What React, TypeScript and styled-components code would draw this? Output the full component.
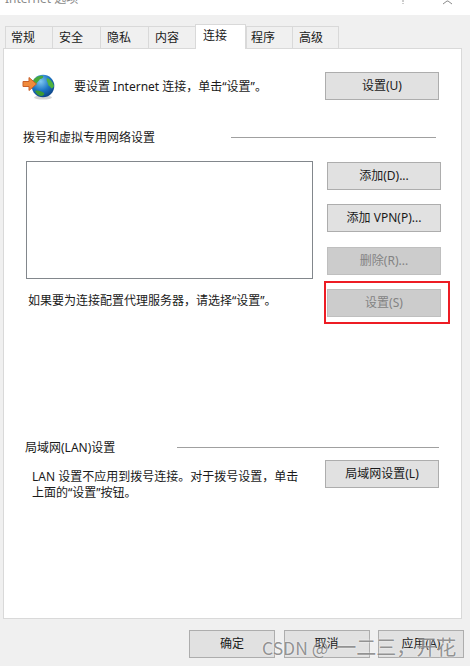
import React from "react";
import styled, { createGlobalStyle } from "styled-components";

const Global = createGlobalStyle`
  html, body { margin: 0; padding: 0; background: #fff; }
  * { box-sizing: border-box; }
`;

const Frame = styled.div`
  position: relative;
  width: 470px;
  height: 666px;
  overflow: hidden;
  display: flex;
  flex-direction: column;
  background: #f0f0f0;
  color: #1a1a1a;
  font: 12px/16px "Noto Sans", "Noto Sans CJK SC", sans-serif;
`;

const TitleBar = styled.div`
  height: 15px;
  flex: none;
  background: #fff;
  overflow: hidden;
  display: flex;
  justify-content: space-between;
  padding: 0 16px 0 5px;
`;

const TitleText = styled.div`
  margin-top: -9px;
  color: #8a8a8a;
  font-size: 12px;
  line-height: 16px;
`;

const TitleControls = styled.svg`
  width: 60px;
  height: 6px;
`;

const TabStrip = styled.div`
  flex: none;
  display: flex;
  align-items: flex-end;
  height: 25px;
  margin-top: 9px;
  padding-left: 5px;
  position: relative;
  z-index: 1;
  margin-bottom: -1px;
`;

const Tab = styled.div<{ $w: number; $pad: number; $active?: boolean }>`
  width: ${(p) => p.$w}px;
  height: ${(p) => (p.$active ? 25 : 23)}px;
  display: flex;
  align-items: center;
  padding-left: ${(p) => p.$pad}px;
  padding-bottom: ${(p) => (p.$active ? 2 : 0)}px;
  background: ${(p) => (p.$active ? "#fff" : "#f0f0f0")};
  border: 1px solid #d9d9d9;
  border-right-width: ${(p) => (p.$active ? 1 : 0)}px;
  border-bottom-width: ${(p) => (p.$active ? 0 : 1)}px;
  &:last-child { border-right-width: 1px; }
`;

const Panel = styled.div`
  flex: none;
  height: 571px;
  margin: 0 8px 0 3px;
  background: #fff;
  border: 1px solid #d9d9d9;
  display: flex;
  flex-direction: column;
  padding: 23px 22px 0 18px;
`;

const IntroRow = styled.div`
  display: flex;
  align-items: center;
  height: 28px;
`;

const Globe = styled.svg`
  width: 34px;
  height: 28px;
  flex: none;
  margin-top: 2px;
`;

const IntroText = styled.div`
  margin-left: 18px;
  flex: 1;
  margin-top: 2px;
`;

const Btn = styled.div<{ $disabled?: boolean; $w?: number }>`
  width: ${(p) => p.$w ?? 114}px;
  height: 28px;
  flex: none;
  display: flex;
  align-items: center;
  justify-content: center;
  background: ${(p) => (p.$disabled ? "#cccccc" : "#e1e1e1")};
  border: 1px solid ${(p) => (p.$disabled ? "#bfbfbf" : "#adadad")};
  color: ${(p) => (p.$disabled ? "#838383" : "#1a1a1a")};
`;

const GroupHead = styled.div<{ $top: number; $left: number; $gap: number; $right: number }>`
  display: flex;
  align-items: center;
  margin-top: ${(p) => p.$top}px;
  margin-left: ${(p) => p.$left}px;
  margin-right: ${(p) => p.$right}px;
  height: 16px;
  gap: ${(p) => p.$gap}px;
`;

const Rule = styled.div`
  flex: 1;
  height: 1px;
  background: #a0a0a0;
  margin-top: -1px;
`;

const DialArea = styled.div`
  display: grid;
  grid-template-columns: 287px 114px;
  column-gap: 14px;
  margin: 16px 0 0 4px;
  width: 415px;
`;

const ListBox = styled.div`
  height: 118px;
  border: 1px solid #82878c;
  background: #fff;
  margin-top: -1px;
`;

const SideStack = styled.div`
  display: flex;
  flex-direction: column;
  gap: 14.33px;
`;

const ProxyNote = styled.div`
  margin: 14px 0 0 2px;
`;

const LanBody = styled.div`
  display: flex;
  justify-content: space-between;
  margin-top: 4px;
  padding-left: 10px;
  width: 417px;
`;

const LanText = styled.div`
  width: 276px;
  padding-top: 9px;
`;

const Footer = styled.div`
  flex: none;
  display: flex;
  justify-content: flex-end;
  gap: 8.5px;
  padding: 11px 6px 0 0;
`;

const Highlight = styled.div`
  position: absolute;
  left: 324px;
  top: 281px;
  width: 126px;
  height: 43px;
  border: 2px solid #ed1c24;
  pointer-events: none;
`;

const Watermark = styled.div`
  position: absolute;
  left: 262px;
  top: 634px;
  font-family: "Noto Sans CJK SC", sans-serif;
  font-size: 20px;
  line-height: 26px;
  white-space: nowrap;
  color: rgba(120, 120, 120, 0.8);
  text-shadow: 0 0 2px rgba(255, 255, 255, 0.9);
  pointer-events: none;
`;

const WatermarkLatin = styled.span`
  font-size: 17.500px;
  margin-right: 8px;
`;

const tabs: [string, number, number][] = [
  ["常规", 47, 5],
  ["安全", 48, 6],
  ["隐私", 48, 6],
  ["内容", 47, 6],
  ["连接", 51, 7],
  ["程序", 46, 4],
  ["高级", 47, 6],
];

const GlobeIcon = () => (
  <Globe viewBox="0 0 34 28">
    <defs>
      <radialGradient id="sea" cx="40%" cy="30%" r="75%">
        <stop offset="0" stopColor="#7fc8f0" />
        <stop offset="0.55" stopColor="#1b74c4" />
        <stop offset="1" stopColor="#0d3f80" />
      </radialGradient>
    </defs>
    <ellipse cx="21" cy="24.5" rx="9" ry="2" fill="#d5d5d5" />
    <circle cx="21" cy="13" r="11.3" fill="url(#sea)" />
    <path d="M12 6c3-3 7-4 9-3 1 1-1 3-3 3-1 2-3 3-4 5-2 0-3-1-3-2z" fill="#46a83a" />
    <path d="M25 5c3 1 6 4 7 8-1 2-2 3-3 2-1-2-3-2-3-4s-2-3-1-6z" fill="#4fb23f" />
    <path d="M13 18c3-1 6 0 9 2 1 1 0 2-2 3-3 0-6-2-7-5z" fill="#3d9a33" />
    <path d="M1 8.500h6V4.500l7.500 6.500L7 17.500v-4H1z" fill="#f08a3c" stroke="#c8602a" strokeWidth="1" />
  </Globe>
);

export default function App() {
  return (
    <Frame>
      <Global />
      <TitleBar>
        <TitleText>Internet 选项</TitleText>
        <TitleControls viewBox="0 0 60 6">
          <path d="M9 0v2M9 3v1" stroke="#9a9a9a" strokeWidth="1" fill="none" />
          <path d="M49 4l4-3h1l4 3" stroke="#8a8a8a" strokeWidth="1" fill="none" />
        </TitleControls>
      </TitleBar>
      <TabStrip>
        {tabs.map(([t, w, pad], i) => (
          <Tab key={t} $w={w} $pad={pad} $active={i === 4}>{t}</Tab>
        ))}
      </TabStrip>
      <Panel>
        <IntroRow>
          <GlobeIcon />
          <IntroText>要设置 Internet 连接，单击“设置”。</IntroText>
          <Btn>设置(U)</Btn>
        </IntroRow>
        <GroupHead $top={30} $left={1} $gap={76} $right={3}>
          拨号和虚拟专用网络设置
          <Rule />
        </GroupHead>
        <DialArea>
          <div>
            <ListBox />
            <ProxyNote>如果要为连接配置代理服务器，请选择“设置”。</ProxyNote>
          </div>
          <SideStack>
            <Btn>添加(D)...</Btn>
            <Btn>添加 VPN(P)...</Btn>
            <Btn $disabled>删除(R)...</Btn>
            <Btn $disabled>设置(S)</Btn>
          </SideStack>
        </DialArea>
        <GroupHead $top={123} $left={3} $gap={62} $right={0}>
          局域网(LAN)设置
          <Rule />
        </GroupHead>
        <LanBody>
          <LanText>LAN 设置不应用到拨号连接。对于拨号设置，单击上面的“设置”按钮。</LanText>
          <Btn>局域网设置(L)</Btn>
        </LanBody>
      </Panel>
      <Footer>
        <Btn $w={86}>确定</Btn>
        <Btn $w={86}>取消</Btn>
        <Btn $w={86}>应用(A)</Btn>
      </Footer>
      <Highlight />
      <Watermark><WatermarkLatin>CSDN @</WatermarkLatin>一二三，开花</Watermark>
    </Frame>
  );
}
